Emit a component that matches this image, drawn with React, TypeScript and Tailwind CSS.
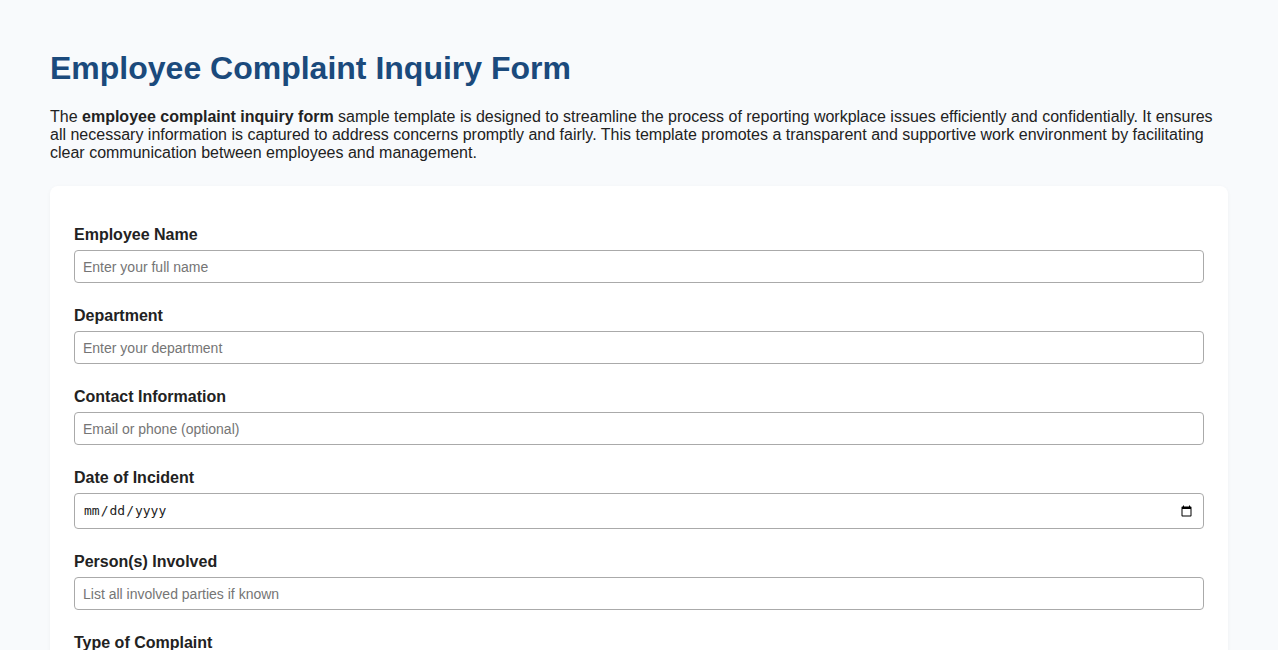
import React from "react";

const fields = [
  { label: "Employee Name", type: "text", placeholder: "Enter your full name" },
  { label: "Department", type: "text", placeholder: "Enter your department" },
  { label: "Contact Information", type: "text", placeholder: "Email or phone (optional)" },
  { label: "Date of Incident", type: "date", placeholder: "" },
  { label: "Person(s) Involved", type: "text", placeholder: "List all involved parties if known" },
];

const App = () => {
  return (
    <div className="min-h-screen bg-[#f8fafc] px-[50px] pt-[50px] pb-10 font-['Liberation_Sans',Arial,sans-serif] text-[#222]">
      <h1 className="text-[32px] leading-[37px] font-bold text-[#1b4a7c]">
        Employee Complaint Inquiry Form
      </h1>
      <p className="mt-[21px] mb-[24px] text-[16px] leading-[18px] text-[#222]">
        The <strong>employee complaint inquiry form</strong> sample template is designed to streamline the
        process of reporting workplace issues efficiently and confidentially. It ensures all necessary
        information is captured to address concerns promptly and fairly. This template promotes a
        transparent and supportive work environment by facilitating clear communication between employees
        and management.
      </p>
      <form className="rounded-lg bg-white px-6 pt-[40px] pb-6 shadow-[0_1px_4px_rgba(0,0,0,0.04)]">
        {fields.map((f) => (
          <div key={f.label} className="mb-[24px]">
            <label className="mb-[6px] block text-[16px] leading-[18px] font-bold text-[#222]">
              {f.label}
            </label>
            {f.type === "date" ? (
              <input
                type="date"
                className="block h-[36px] w-full rounded border border-[#aaa] px-2 font-['DejaVu_Sans_Mono',monospace] text-[13px] text-[#222]"
              />
            ) : (
              <input
                type="text"
                placeholder={f.placeholder}
                className="block h-[33px] w-full rounded border border-[#aaa] px-2 text-[14px] text-[#222] placeholder:text-[#757575]"
              />
            )}
          </div>
        ))}
        <div className="mb-[24px]">
          <label className="mb-[6px] block text-[16px] leading-[18px] font-bold text-[#222]">
            Type of Complaint
          </label>
          <select className="block h-[33px] w-full rounded border border-[#aaa] px-2 text-[14px]">
            <option>Select complaint type</option>
          </select>
        </div>
      </form>
    </div>
  );
};

export default App;
